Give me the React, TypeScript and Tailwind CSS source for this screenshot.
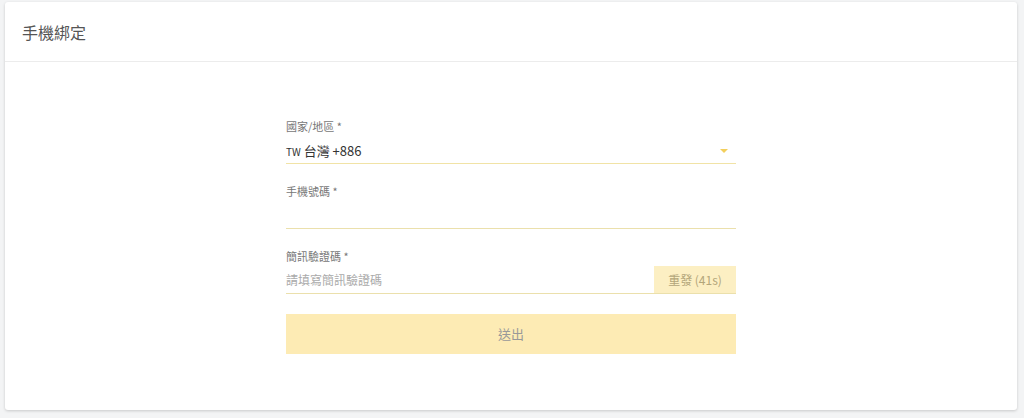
import { useState } from "react";

export default function App() {
  const [phone, setPhone] = useState("");
  const [code, setCode] = useState("");

  return (
    <div
      className="min-h-[418px] bg-[#f3f4f5] pl-[5px] pr-[7px] pt-[2px] pb-[8px]"
      style={{ fontFamily: '"Noto Sans CJK TC", "Noto Sans", sans-serif' }}
    >
      <div className="h-[408px] rounded-[3px] bg-white shadow-[0_1px_3px_rgba(0,0,0,0.18)]">
        <div className="flex h-[60px] items-center border-b border-[#ececec] px-[17px]">
          <h1 className="text-[16px] text-[#555]">手機綁定</h1>
        </div>

        <form className="mx-auto w-[450px] pt-[56px]" onSubmit={(e) => e.preventDefault()}>
          <div>
            <label className="block text-[11px] leading-[16px] text-[#777]">國家/地區 *</label>
            <div className="mt-[4px] flex h-[26px] items-center justify-between border-b border-[#f1e3a6]">
              <span className="text-[13px] text-[#333]">
                <span className="text-[10px]">TW</span> 台灣 +886
              </span>
              <span className="mr-[8px] h-0 w-0 border-x-[4px] border-t-[4px] border-x-transparent border-t-[#f3cf5c]" />
            </div>
          </div>

          <div className="mt-[19px]">
            <label className="block text-[11px] leading-[16px] text-[#777]">手機號碼 *</label>
            <input
              value={phone}
              onChange={(e) => setPhone(e.target.value)}
              className="mt-[1px] h-[29px] w-full border-b border-[#ebe0ac] bg-transparent text-[13px] outline-none"
            />
          </div>

          <div className="mt-[19px]">
            <label className="block text-[11px] leading-[16px] text-[#777]">簡訊驗證碼 *</label>
            <div className="mt-[2px] flex h-[28px] items-stretch border-b border-[#ebe0ac]">
              <input
                value={code}
                onChange={(e) => setCode(e.target.value)}
                placeholder="請填寫簡訊驗證碼"
                className="flex-1 bg-transparent text-[12px] text-[#333] outline-none placeholder:text-[#aaa]"
              />
              <button
                type="button"
                className="w-[82px] bg-[#fcefc3] text-[12px] text-[#b3a67a]"
              >
                重發 (41s)
              </button>
            </div>
          </div>

          <button
            type="submit"
            className="mt-[20px] flex h-[40px] w-full items-center justify-center bg-[#fdebb4] text-[13px] text-[#999]"
          >
            送出
          </button>
        </form>
      </div>
    </div>
  );
}
